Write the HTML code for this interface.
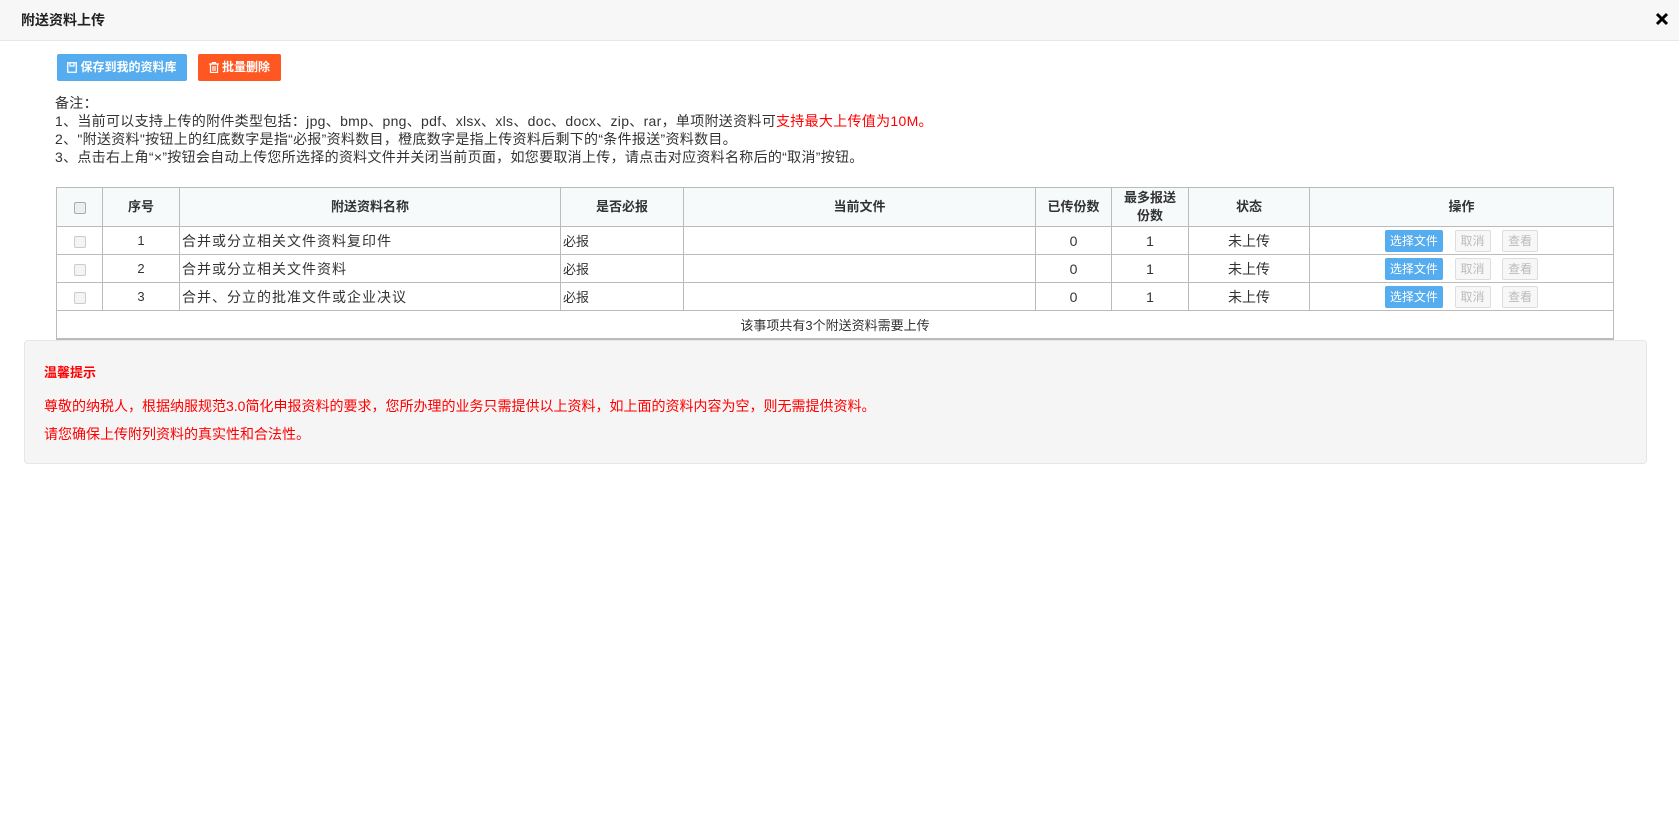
<!DOCTYPE html>
<html><head><meta charset="utf-8"><style>
*{margin:0;padding:0;box-sizing:border-box}
body{width:1679px;height:813px;background:#fff;font-family:"Liberation Sans","Noto Sans CJK SC",sans-serif;color:#333;position:relative;overflow:hidden}
.hd{position:absolute;left:0;top:0;width:1679px;height:41px;background:#f7f7f7;border-bottom:1px solid #e8e8e8}
.hd .t{position:absolute;left:21px;top:10px;font-size:14px;font-weight:bold;color:#222}
.hd svg{position:absolute;left:1655px;top:12px}
.btn{position:absolute;top:54px;height:27px;color:#fff;font-size:12px;font-weight:bold;line-height:27px;text-align:center;border-radius:2px}
.btn svg{vertical-align:-2px;margin-right:3px}
.notes{position:absolute;left:55px;top:94px;font-size:14px;line-height:18px;color:#333;letter-spacing:0.3px}
.red{color:#f00}
table{position:absolute;left:56px;top:187px;border-collapse:collapse;width:1557px;font-size:13px;table-layout:fixed}
td,th{border:1px solid #bbb;text-align:center;height:28px;padding:0}
td{font-size:14px}
th{background:#f7fafb;height:39px;font-weight:bold;color:#333;line-height:18px}
td.l{text-align:left;padding-left:2px;letter-spacing:1px}
.cb{display:inline-block;width:12px;height:12px;border:1px solid #ccc;border-radius:2px;background:#f4f4f4;vertical-align:middle}
.ob{display:inline-block;height:22px;line-height:20px;font-size:12px;vertical-align:middle;border-radius:2px;letter-spacing:0}
.sel{width:58px;background:#55acee;color:#fff;border:1px solid #55acee}
.dis{width:36px;background:#f7f7f7;color:#bbb;border:1px solid #ddd}
.tips{position:absolute;left:24px;top:340px;width:1623px;height:124px;background:#f5f5f5;border:1px solid #e6e6e6;border-radius:4px;color:#f00;font-size:14px}
</style></head><body>
<div class="hd"><span class="t">附送资料上传</span><svg width="14" height="14" viewBox="0 0 14 14"><path d="M2 2L12 12M12 2L2 12" stroke="#000" stroke-width="3"/></svg></div>
<div class="btn" style="left:57px;width:130px;background:#55acee"><svg width="10" height="11" viewBox="0 0 10 11"><rect x="0.75" y="0.75" width="8.5" height="9.5" fill="none" stroke="#fff" stroke-width="1.3"/><path d="M3 1v3h4V1" fill="none" stroke="#fff" stroke-width="1.2"/></svg>保存到我的资料库</div>
<div class="btn" style="left:198px;width:83px;background:#ff5722"><svg width="10" height="11" viewBox="0 0 10 11"><path d="M0 2h10M3.5 2V0.6h3V2M1.5 2.5v8h7v-8M4 4v5M6 4v5" fill="none" stroke="#fff" stroke-width="1.2"/></svg>批量删除</div>
<div class="notes">备注：<br>1、当前可以支持上传的附件类型包括：jpg、bmp、png、pdf、xlsx、xls、doc、docx、zip、rar，单项附送资料可<span class="red">支持最大上传值为10M。</span><br>2、"附送资料"按钮上的红底数字是指“必报”资料数目，橙底数字是指上传资料后剩下的“条件报送”资料数目。<br>3、点击右上角“×”按钮会自动上传您所选择的资料文件并关闭当前页面，如您要取消上传，请点击对应资料名称后的“取消”按钮。</div>
<table>
<colgroup><col style="width:46px"><col style="width:77px"><col style="width:381px"><col style="width:123px"><col style="width:352px"><col style="width:76px"><col style="width:77px"><col style="width:121px"><col style="width:304px"></colgroup>
<tr><th><span class="cb" style="border-color:#aaa;background:#eee"></span></th><th>序号</th><th>附送资料名称</th><th>是否必报</th><th>当前文件</th><th>已传份数</th><th>最多报送<br>份数</th><th>状态</th><th>操作</th></tr>
<tr><td><span class="cb"></span></td><td style="font-size:13px">1</td><td class="l">合并或分立相关文件资料复印件</td><td class="l" style="font-size:13px;letter-spacing:0">必报</td><td></td><td>0</td><td>1</td><td>未上传</td><td><span class="ob sel">选择文件</span>&nbsp;&nbsp;&nbsp;<span class="ob dis">取消</span>&nbsp;&nbsp;&nbsp;<span class="ob dis">查看</span></td></tr>
<tr><td><span class="cb"></span></td><td style="font-size:13px">2</td><td class="l">合并或分立相关文件资料</td><td class="l" style="font-size:13px;letter-spacing:0">必报</td><td></td><td>0</td><td>1</td><td>未上传</td><td><span class="ob sel">选择文件</span>&nbsp;&nbsp;&nbsp;<span class="ob dis">取消</span>&nbsp;&nbsp;&nbsp;<span class="ob dis">查看</span></td></tr>
<tr><td><span class="cb"></span></td><td style="font-size:13px">3</td><td class="l">合并、分立的批准文件或企业决议</td><td class="l" style="font-size:13px;letter-spacing:0">必报</td><td></td><td>0</td><td>1</td><td>未上传</td><td><span class="ob sel">选择文件</span>&nbsp;&nbsp;&nbsp;<span class="ob dis">取消</span>&nbsp;&nbsp;&nbsp;<span class="ob dis">查看</span></td></tr>
<tr><td colspan="9" style="border-bottom:2px solid #bbb;font-size:13px">该事项共有3个附送资料需要上传</td></tr>
</table>
<div class="tips">
<div style="position:absolute;left:19px;top:21px;font-weight:bold;font-size:13px">温馨提示</div>
<div style="position:absolute;left:19px;top:55px">尊敬的纳税人，根据纳服规范3.0简化申报资料的要求，您所办理的业务只需提供以上资料，如上面的资料内容为空，则无需提供资料。</div>
<div style="position:absolute;left:19px;top:83px">请您确保上传附列资料的真实性和合法性。</div>
</div>
</body></html>
